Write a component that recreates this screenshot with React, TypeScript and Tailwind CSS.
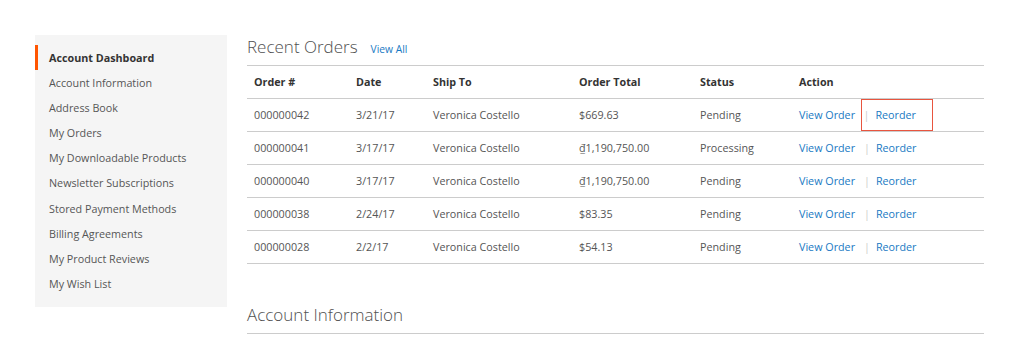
import React from "react";

const links = [
  "Account Dashboard",
  "Account Information",
  "Address Book",
  "My Orders",
  "My Downloadable Products",
  "Newsletter Subscriptions",
  "Stored Payment Methods",
  "Billing Agreements",
  "My Product Reviews",
  "My Wish List",
];

const orders = [
  { id: "000000042", date: "3/21/17", ship: "Veronica Costello", total: "$669.63", status: "Pending" },
  { id: "000000041", date: "3/17/17", ship: "Veronica Costello", total: "₫1,190,750.00", status: "Processing" },
  { id: "000000040", date: "3/17/17", ship: "Veronica Costello", total: "₫1,190,750.00", status: "Pending" },
  { id: "000000038", date: "2/24/17", ship: "Veronica Costello", total: "$83.35", status: "Pending" },
  { id: "000000028", date: "2/2/17", ship: "Veronica Costello", total: "$54.13", status: "Pending" },
];

const cols = "grid grid-cols-[102px_77px_146px_121px_99px_1fr]";

export default function App() {
  return (
    <main className="w-[1024px] h-[357px] bg-white flex pt-[35px] pl-[35px] font-['Open_Sans',sans-serif] text-[10.75px] text-[#555] overflow-hidden">
      {/* Sidebar */}
      <aside className="w-[192px] h-[272px] bg-[#f5f5f5] pt-[10px] shrink-0">
        <ul>
          {links.map((l, i) => (
            <li
              key={l}
              className={
                i === 0
                  ? "h-[25.2px] flex items-center pl-[11px] border-l-[3px] border-[#ff5501] font-bold text-[#333]"
                  : "h-[25.2px] flex items-center pl-[14px]"
              }
            >
              {l}
            </li>
          ))}
        </ul>
      </aside>

      {/* Main */}
      <section className="ml-[20px] w-[737px]">
        <div className="flex items-baseline h-[31px] border-b border-[#cccccc]">
          <h2 className="text-[17px] font-light text-[#505050] leading-[24px]">Recent Orders</h2>
          <a className="ml-[13px] text-[10.25px] text-[#1979c3]">View All</a>
        </div>

        <div className={`${cols} h-[33px] pt-[1px] items-center border-b border-[#cccccc] font-bold text-[#333]`}>
          <div className="pl-[7px]">Order #</div>
          <div className="pl-[7px]">Date</div>
          <div className="pl-[7px]">Ship To</div>
          <div className="pl-[7px]">Order Total</div>
          <div className="pl-[7px]">Status</div>
          <div className="pl-[7px]">Action</div>
        </div>

        {orders.map((o, i) => (
          <div key={o.id} className={`${cols} h-[33px] items-center border-b border-[#cccccc]`}>
            <div className="pl-[7px]">{o.id}</div>
            <div className="pl-[7px]">{o.date}</div>
            <div className="pl-[7px]">{o.ship}</div>
            <div className="pl-[7px]">{o.total}</div>
            <div className="pl-[7px]">{o.status}</div>
            <div className="pl-[7px] flex items-center h-full">
              <a className="text-[#1979c3]">View Order</a>
              <div
                className={
                  i === 0
                    ? "ml-[6px] h-full w-[72px] border-[1.5px] border-[#e8553f] flex items-center pl-[1.5px]"
                    : "ml-[6px] flex items-center pl-[3px]"
                }
              >
                <span className="text-[#ccc]">|</span>
                <a className="ml-[6px] text-[#1979c3]">Reorder</a>
              </div>
            </div>
          </div>
        ))}

        <div className="mt-[34px] h-[36px] border-b border-[#cccccc] flex items-end pb-[6px]">
          <h2 className="text-[17px] font-light text-[#505050]">Account Information</h2>
        </div>
      </section>
    </main>
  );
}
